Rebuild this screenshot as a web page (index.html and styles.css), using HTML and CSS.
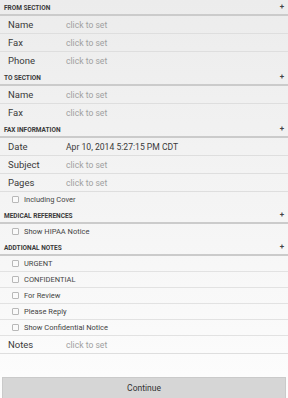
FILE: index.html
```html
<!DOCTYPE html>
<html>
<head>
<meta charset="utf-8">
<link rel="stylesheet" href="styles.css">
</head>
<body>
<div class="page">
  <div class="list">
    <div class="hdr"><span>FROM SECTION</span><span class="plus">+</span></div>
    <div class="row"><span class="lbl">Name</span><span class="val">click to set</span></div>
    <div class="row"><span class="lbl">Fax</span><span class="val">click to set</span></div>
    <div class="row last"><span class="lbl">Phone</span><span class="val">click to set</span></div>

    <div class="hdr"><span>TO SECTION</span><span class="plus">+</span></div>
    <div class="row"><span class="lbl">Name</span><span class="val">click to set</span></div>
    <div class="row last"><span class="lbl">Fax</span><span class="val">click to set</span></div>

    <div class="hdr"><span>FAX INFORMATION</span><span class="plus">+</span></div>
    <div class="row"><span class="lbl">Date</span><span class="val set">Apr 10, 2014 5:27:15 PM CDT</span></div>
    <div class="row"><span class="lbl">Subject</span><span class="val">click to set</span></div>
    <div class="row"><span class="lbl">Pages</span><span class="val">click to set</span></div>
    <div class="chk last"><span class="box"></span><span>Including Cover</span></div>

    <div class="hdr"><span>MEDICAL REFERENCES</span><span class="plus">+</span></div>
    <div class="chk last"><span class="box"></span><span>Show HIPAA Notice</span></div>

    <div class="hdr"><span>ADDTIONAL NOTES</span><span class="plus">+</span></div>
    <div class="chk"><span class="box"></span><span>URGENT</span></div>
    <div class="chk"><span class="box"></span><span>CONFIDENTIAL</span></div>
    <div class="chk"><span class="box"></span><span>For Review</span></div>
    <div class="chk"><span class="box"></span><span>Please Reply</span></div>
    <div class="chk"><span class="box"></span><span>Show Confidential Notice</span></div>
    <div class="row"><span class="lbl">Notes</span><span class="val">click to set</span></div>
  </div>
  <div class="footer">
    <button class="btn">Continue</button>
  </div>
</div>
</body>
</html>
```
FILE: styles.css
```css
html, body {
  margin: 0;
  padding: 0;
  height: 100%;
}
body {
  font-family: Roboto, "Liberation Sans", sans-serif;
  background: linear-gradient(to bottom, #ececec 0%, #f4f4f4 50%, #fdfdfd 100%);
  color: #333;
}
.page {
  height: 398px;
  display: flex;
  flex-direction: column;
}
.list {
  flex: 1;
}
.hdr {
  height: 14px;
  border-bottom: 2px solid #cbcbcb;
  display: flex;
  align-items: flex-end;
  justify-content: space-between;
  padding: 0 4px 0 4px;
  font-size: 6.5px;
  font-weight: bold;
  color: #3a3a3a;
  line-height: 1;
}
.hdr > span:first-child {
  padding-bottom: 3px;
}
.plus {
  font-size: 8px;
  color: #444;
  padding-bottom: 3px;
}
.row {
  height: 17px;
  border-bottom: 1px solid #dedede;
  display: flex;
  align-items: center;
}
.row.last, .chk.last {
  border-bottom-color: transparent;
}
.lbl {
  width: 58px;
  padding-left: 8px;
  font-size: 9.5px;
  color: #3a3a3a;
}
.val {
  font-size: 8.6px;
  color: #a0a0a0;
}
.val.set {
  color: #3a3a3a;
}
.chk {
  height: 15px;
  border-bottom: 1px solid #e2e2e2;
  display: flex;
  align-items: center;
  font-size: 7.5px;
  color: #444;
}
.box {
  width: 5px;
  height: 5px;
  border: 1px solid #b8b8b8;
  border-radius: 1px;
  margin-left: 12px;
  margin-right: 5px;
  background: #fafafa;
}
.footer {
  padding: 0 2px;
}
.btn {
  display: block;
  width: 100%;
  height: 21px;
  background: #d6d6d6;
  border: 1px solid #cacaca;
  border-bottom: none;
  font-family: Roboto, "Liberation Sans", sans-serif;
  font-size: 8.5px;
  color: #333;
  padding: 0;
}
```
